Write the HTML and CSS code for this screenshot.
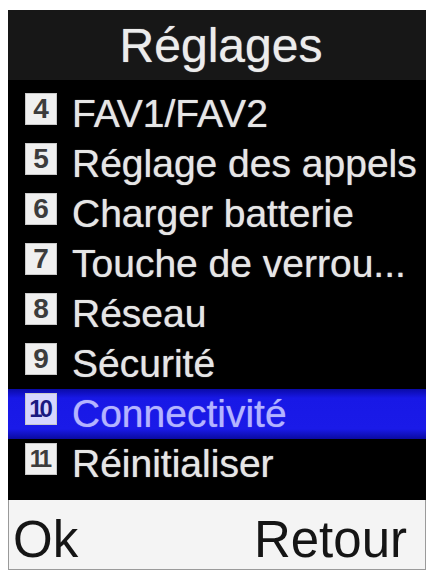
FILE: index.html
```html
<!DOCTYPE html>
<html lang="fr">
<head>
<meta charset="utf-8">
<title>Réglages</title>
<link rel="stylesheet" href="styles.css">
</head>
<body>
<div class="screen">
  <div class="titlebar">Réglages</div>
  <ul class="list">
    <li class="row"><span class="badge">4</span><span class="label">FAV1/FAV2</span></li>
    <li class="row"><span class="badge">5</span><span class="label">Réglage des appels</span></li>
    <li class="row"><span class="badge">6</span><span class="label">Charger batterie</span></li>
    <li class="row"><span class="badge">7</span><span class="label">Touche de verrou...</span></li>
    <li class="row"><span class="badge">8</span><span class="label">Réseau</span></li>
    <li class="row"><span class="badge">9</span><span class="label">Sécurité</span></li>
    <li class="row selected"><span class="badge narrow">10</span><span class="label">Connectivité</span></li>
    <li class="row"><span class="badge narrow">11</span><span class="label">Réinitialiser</span></li>
  </ul>
  <div class="softkeys"><span>Ok</span><span>Retour</span></div>
</div>
</body>
</html>
```
FILE: styles.css
```css
html, body {
  margin: 0;
  padding: 0;
  background: #ffffff;
}
body {
  font-family: "Liberation Sans", Arial, sans-serif;
}
.screen {
  width: 418px;
  margin: 10px 0 0 8px;
  background: #000;
}
.titlebar {
  height: 70px;
  box-sizing: border-box;
  padding: 1px 0 0 8px;
  line-height: 70px;
  font-size: 48px;
  color: #ececec;
  text-align: center;
  background: #171717;
  text-shadow: 0 0 1px rgba(255, 255, 255, 0.7);
}
.list {
  list-style: none;
  margin: 0;
  padding: 9px 0 11px 0;
  background: #000;
}
.row {
  display: flex;
  align-items: flex-start;
  height: 50px;
  padding-left: 17px;
}
.badge {
  width: 32px;
  height: 32px;
  margin-top: 4px;
  background: #f0f0f0;
  box-shadow: inset 0 0 0 1px #c8c8c8;
  color: #3c3c3c;
  font-size: 28px;
  font-weight: 700;
  line-height: 32px;
  text-align: center;
  flex-shrink: 0;
}
.badge.narrow {
  font-size: 24px;
  letter-spacing: -3px;
  text-indent: -3px;
}
.label {
  margin-left: 15px;
  font-size: 39px;
  line-height: 50px;
  color: #e6e6e6;
  white-space: nowrap;
  text-shadow: 0 0 1px rgba(255, 255, 255, 0.7);
}
.selected {
  background: linear-gradient(to bottom, #0a0aa8 0%, #1818e6 18%, #1a1ae8 80%, #0a0aa0 100%);
}
.selected .label {
  color: #b4b4ff;
  text-shadow: 0 0 1px rgba(180, 180, 255, 0.7);
}
.selected .badge {
  background: #d6d6ff;
  color: #1a1a80;
}
.softkeys {
  display: flex;
  justify-content: space-between;
  height: 70px;
  box-sizing: border-box;
  padding: 9px 18px 0 4px;
  line-height: 61px;
  font-size: 51px;
  color: #151515;
  background: #f4f4f4;
  border: 1px solid #9a9a9a;
  border-top: none;
}
```
